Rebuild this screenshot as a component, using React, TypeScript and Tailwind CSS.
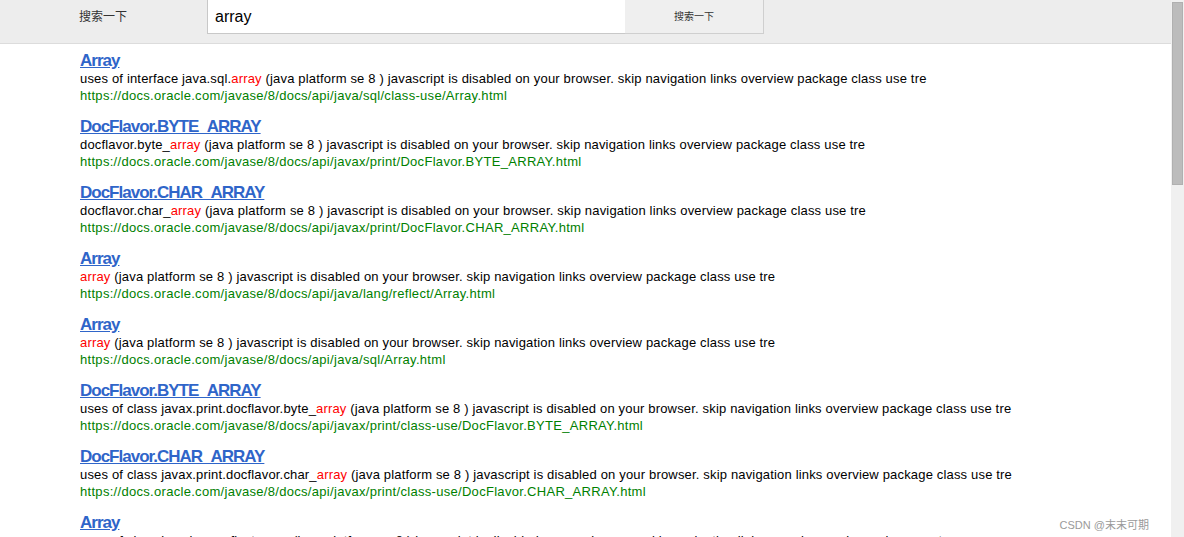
import { Fragment } from 'react';

interface ResultItem {
  title: string;
  before: string;
  after: string;
  url: string;
}

const tail = ' (java platform se 8 ) javascript is disabled on your browser. skip navigation links overview package class use tre';

const results: ResultItem[] = [
  {
    title: 'Array',
    before: 'uses of interface java.sql.',
    after: tail,
    url: 'https://docs.oracle.com/javase/8/docs/api/java/sql/class-use/Array.html',
  },
  {
    title: 'DocFlavor.BYTE_ARRAY',
    before: 'docflavor.byte_',
    after: tail,
    url: 'https://docs.oracle.com/javase/8/docs/api/javax/print/DocFlavor.BYTE_ARRAY.html',
  },
  {
    title: 'DocFlavor.CHAR_ARRAY',
    before: 'docflavor.char_',
    after: tail,
    url: 'https://docs.oracle.com/javase/8/docs/api/javax/print/DocFlavor.CHAR_ARRAY.html',
  },
  {
    title: 'Array',
    before: '',
    after: tail,
    url: 'https://docs.oracle.com/javase/8/docs/api/java/lang/reflect/Array.html',
  },
  {
    title: 'Array',
    before: '',
    after: tail,
    url: 'https://docs.oracle.com/javase/8/docs/api/java/sql/Array.html',
  },
  {
    title: 'DocFlavor.BYTE_ARRAY',
    before: 'uses of class javax.print.docflavor.byte_',
    after: tail,
    url: 'https://docs.oracle.com/javase/8/docs/api/javax/print/class-use/DocFlavor.BYTE_ARRAY.html',
  },
  {
    title: 'DocFlavor.CHAR_ARRAY',
    before: 'uses of class javax.print.docflavor.char_',
    after: tail,
    url: 'https://docs.oracle.com/javase/8/docs/api/javax/print/class-use/DocFlavor.CHAR_ARRAY.html',
  },
  {
    title: 'Array',
    before: 'uses of class java.lang.reflect.',
    after: tail,
    url: 'https://docs.oracle.com/javase/8/docs/api/java/lang/reflect/class-use/Array.html',
  },
];

export default function App() {
  return (
    <div className="flex h-[537px] w-[1184px] overflow-hidden bg-white font-['Liberation_Sans','Noto_Sans_CJK_SC',sans-serif]">
      <div className="relative flex min-w-0 flex-1 flex-col">
        {/* 顶部搜索栏 */}
        <div className="flex h-[44px] shrink-0 items-start border-b border-[#dcdcdc] bg-[#ededed]">
          <div className="flex h-[34px] w-[207px] items-center pl-[79px] text-[12px] text-[#333]">搜索一下</div>
          <div className="flex h-[34px] w-[418px] items-center border-b border-l border-[#c8c8c8] bg-white pl-[7px] text-[16px] text-black">
            array
          </div>
          <button
            type="button"
            className="flex h-[34px] w-[139px] items-center justify-center border-r border-b border-[#cfcfcf] bg-[#efefef] text-[10px] text-[#333]"
          >
            搜索一下
          </button>
        </div>

        {/* 搜索结果 */}
        <div className="flex flex-col pl-[80px] pt-[8px]">
          {results.map((r, i) => (
            <div key={i} className="mb-[14px] flex flex-col">
              <a href="#" className="text-[17px] leading-[18px] font-bold tracking-[-1px] text-[#2f65c9] underline">
                {r.title}
              </a>
              <p className="text-[13px] leading-[17px] tracking-[0.17px] whitespace-nowrap text-black">
                <Fragment>
                  {r.before}
                  <span className="text-[#ff0000]">array</span>
                  {r.after}
                </Fragment>
              </p>
              <p className="text-[13px] leading-[17px] tracking-[0.3px] whitespace-nowrap text-[#008000]">{r.url}</p>
            </div>
          ))}
        </div>

        <div className="absolute right-[22px] bottom-[4px] text-[11px] text-[#9a9a9a]">CSDN @末末可期</div>
      </div>

      {/* 滚动条 */}
      <div className="flex w-[13px] shrink-0 flex-col bg-[#f0f0f0] px-[1px] pt-[2px]">
        <div className="h-[183px] border border-[#b0b0b0] bg-[#bcbcbc]" />
      </div>
    </div>
  );
}
